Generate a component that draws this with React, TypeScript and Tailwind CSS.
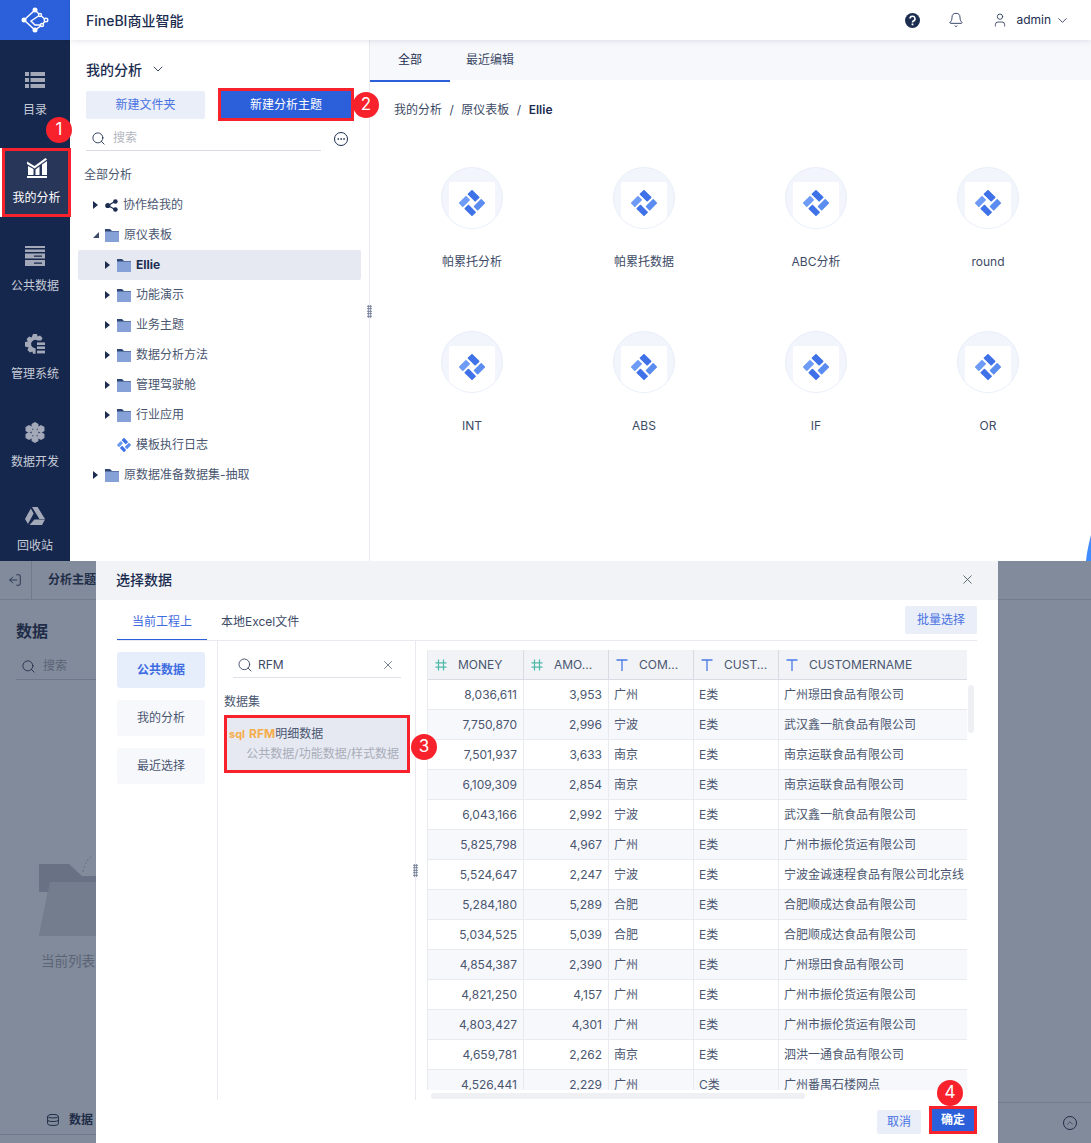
import React from "react";
import { ChevronDown, Search, X, Bell, User, Ellipsis, LogOut } from "lucide-react";

const navItems = [
  { label: "目录", icon: "list" },
  { label: "我的分析", icon: "chart", active: true },
  { label: "公共数据", icon: "store" },
  { label: "管理系统", icon: "gear" },
  { label: "数据开发", icon: "cube" },
  { label: "回收站", icon: "drive" },
];

const treeRows = [
  { label: "协作给我的", level: 1, kind: "share" },
  { label: "原仪表板", level: 1, kind: "open" },
  { label: "Ellie", level: 2, kind: "folder", selected: true },
  { label: "功能演示", level: 2, kind: "folder" },
  { label: "业务主题", level: 2, kind: "folder" },
  { label: "数据分析方法", level: 2, kind: "folder" },
  { label: "管理驾驶舱", level: 2, kind: "folder" },
  { label: "行业应用", level: 2, kind: "folder" },
  { label: "模板执行日志", level: 2, kind: "logo" },
  { label: "原数据准备数据集-抽取", level: 1, kind: "folder" },
];

const files = ["帕累托分析", "帕累托数据", "ABC分析", "round", "INT", "ABS", "IF", "OR"];

const columns = [
  { name: "MONEY", type: "num", w: "w-[96px]" },
  { name: "AMO...", type: "num", w: "w-[85px]" },
  { name: "COM...", type: "text", w: "w-[85px]" },
  { name: "CUST...", type: "text", w: "w-[85px]" },
  { name: "CUSTOMERNAME", type: "text", w: "w-[188px]" },
];

const rows = [
  ["8,036,611", "3,953", "广州", "E类", "广州璟田食品有限公司"],
  ["7,750,870", "2,996", "宁波", "E类", "武汉鑫一航食品有限公司"],
  ["7,501,937", "3,633", "南京", "E类", "南京运联食品有限公司"],
  ["6,109,309", "2,854", "南京", "E类", "南京运联食品有限公司"],
  ["6,043,166", "2,992", "宁波", "E类", "武汉鑫一航食品有限公司"],
  ["5,825,798", "4,967", "广州", "E类", "广州市振伦货运有限公司"],
  ["5,524,647", "2,247", "宁波", "E类", "宁波金诚速程食品有限公司北京线"],
  ["5,284,180", "5,289", "合肥", "E类", "合肥顺成达食品有限公司"],
  ["5,034,525", "5,039", "合肥", "E类", "合肥顺成达食品有限公司"],
  ["4,854,387", "2,390", "广州", "E类", "广州璟田食品有限公司"],
  ["4,821,250", "4,157", "广州", "E类", "广州市振伦货运有限公司"],
  ["4,803,427", "4,301", "广州", "E类", "广州市振伦货运有限公司"],
  ["4,659,781", "2,262", "南京", "E类", "泗洪一通食品有限公司"],
  ["4,526,441", "2,229", "广州", "C类", "广州番禺石楼网点"],
];

// 数据开发图标的花瓣位置
const petals = [
  [10, 4],
  [4, 7],
  [16, 7],
  [4, 14],
  [16, 14],
  [10, 17],
  [10, 10.5],
];

function hexPoints(cx: number, cy: number, r: number) {
  return [0, 60, 120, 180, 240, 300]
    .map((a) => {
      const rad = ((a + 30) * Math.PI) / 180;
      return `${cx + r * Math.cos(rad)},${cy + r * Math.sin(rad)}`;
    })
    .join(" ");
}

function NavIcon({ name, active }: { name: string; active?: boolean }) {
  const c = active ? "#ffffff" : "#a3a9b8";
  if (name === "list")
    return (
      <svg width="20" height="16" viewBox="0 0 20 16" fill={c}>
        <rect x="0" y="0" width="4" height="4" />
        <rect x="5.5" y="0" width="14.5" height="4" />
        <rect x="0" y="6" width="4" height="4" />
        <rect x="5.5" y="6" width="14.5" height="4" />
        <rect x="0" y="12" width="4" height="4" />
        <rect x="5.5" y="12" width="14.5" height="4" />
      </svg>
    );
  if (name === "chart")
    return (
      <svg width="20" height="20" viewBox="0 0 20 20" fill={c}>
        <path d="M0 3.5 L7.5 8 L18.5 0 L20 1.5 L7.7 10.5 L0 6 Z" />
        <path d="M1 8 L6.5 11 V17 H1 Z" />
        <path d="M8.5 11.5 L12.5 8.5 V17 H8.5 Z" />
        <path d="M15 6.5 L20 3 V17 H15 Z" />
        <rect x="0" y="18" width="20" height="2" />
      </svg>
    );
  if (name === "store")
    return (
      <svg width="20" height="20" viewBox="0 0 20 20" fill={c}>
        <rect x="0" y="0" width="20" height="2" />
        <rect x="0" y="3.5" width="20" height="2.5" />
        <path d="M0 7.5 H20 V12.5 H0 Z M9 9.5 V10.8 H17 V9.5 Z" fillRule="evenodd" />
        <path d="M0 14 H20 V20 H0 Z M9 16.5 V17.8 H17 V16.5 Z" fillRule="evenodd" />
      </svg>
    );
  if (name === "gear")
    return (
      <svg width="20" height="20" viewBox="0 0 20 20" fill={c}>
        <path d="M8 0 H12 L12.6 2.6 L15 1.4 L17.6 4 L16.2 6.4 L12.4 6.4 A4.2 4.2 0 1 0 10.6 14.2 L10.6 19.8 H8 L7.4 17.4 L5 18.6 L2.4 16 L3.6 13.6 L0 12.4 V8 L2.8 7.4 L1.6 5 L4.2 2.4 L6.6 3.6 Z" />
        <rect x="12" y="8.4" width="8" height="2.6" />
        <rect x="12" y="12.4" width="8" height="2.6" />
        <rect x="12" y="16.6" width="8" height="2.8" />
      </svg>
    );
  if (name === "cube")
    return (
      <svg width="20" height="21" viewBox="0 0 20 21" fill={c}>
        {petals.map(([x, y]) => (
          <polygon key={`${x}-${y}`} points={hexPoints(x, y, 4)} />
        ))}
      </svg>
    );
  return (
    <svg width="20" height="18" viewBox="0 0 20 18" fill={c}>
      <path d="M7 0 H12.6 L20 12 H14.4 Z" />
      <path d="M5.8 1.6 L8.6 6.4 L3 17 L0 12 Z" />
      <path d="M9.4 12.6 H20 L17 18 H4.6 Z" />
    </svg>
  );
}

function Logo({ size = 26 }: { size?: number }) {
  return (
    <svg width={size} height={size} viewBox="0 0 26 26" className="shrink-0">
      <g transform="rotate(45 13 13)">
        <rect x="3.5" y="3.5" width="11" height="6.5" rx="0.8" fill="#3f71e8" />
        <rect x="16.5" y="3.5" width="6" height="11" rx="0.8" fill="#5b8cf0" />
        <rect x="11.5" y="16.5" width="11" height="6" rx="0.8" fill="#3f71e8" />
        <rect x="3.5" y="12" width="6" height="10.5" rx="0.8" fill="#6e9bf5" />
      </g>
    </svg>
  );
}

function Folder() {
  return (
    <svg width="14" height="13" viewBox="0 0 14 13" className="shrink-0">
      <path d="M0 0 H5 L7 2 H14 V4 H0 Z" fill="#2f4672" />
      <rect x="0" y="2.5" width="14" height="10.5" fill="#86a0d8" />
    </svg>
  );
}

function Caret({ open }: { open?: boolean }) {
  if (open)
    return (
      <svg width="6" height="6" viewBox="0 0 6 6">
        <path d="M0 6 L6 0 V6 Z" fill="#3c4a68" />
      </svg>
    );
  return (
    <svg width="5" height="8" viewBox="0 0 5 8">
      <path d="M0 0 L5 4 L0 8 Z" fill="#1c2d50" />
    </svg>
  );
}

function TreeRow({ row }: { row: (typeof treeRows)[number] }) {
  const pad = row.level === 1 ? "pl-[15px]" : "pl-[27px]";
  return (
    <div className={`flex items-center h-[30px] rounded-[2px] ${pad} ${row.selected ? "bg-[#e6e9f2]" : ""}`}>
      <div className="w-[12px] flex items-center">{row.kind !== "logo" && <Caret open={row.kind === "open"} />}</div>
      {row.kind === "share" ? (
        <svg width="13" height="13" viewBox="0 0 13 13" className="shrink-0">
          <path d="M3 6.5 L10 2.5 M3 6.5 L10 10.5" stroke="#1c2d50" strokeWidth="1.3" />
          <circle cx="2.8" cy="6.5" r="2.6" fill="#1c2d50" />
          <circle cx="10.4" cy="2.5" r="2.3" fill="#1c2d50" />
          <circle cx="10.4" cy="10.5" r="2.3" fill="#1c2d50" />
        </svg>
      ) : row.kind === "logo" ? (
        <Logo size={14} />
      ) : (
        <Folder />
      )}
      <span className={`ml-[5px] text-[12px] ${row.selected ? "font-bold text-[#1c2d50]" : "text-[#4a5670]"}`}>{row.label}</span>
    </div>
  );
}

function Dots() {
  return <div className="w-[5px] h-[13px] bg-[radial-gradient(#6b7690_1px,transparent_1px)] bg-[length:2.5px_2.5px]" />;
}

function Badge({ n, className }: { n: number; className: string }) {
  return (
    <div className={`absolute w-[26px] h-[26px] rounded-full bg-[#f7222c] text-white text-[17px] flex items-center justify-center ${className}`}>{n}</div>
  );
}

export default function App() {
  return (
    <div className="relative w-[1091px] h-[1143px] overflow-hidden bg-white text-[12px] text-[#1c2d50] font-['Inter','Noto_Sans_CJK_SC',sans-serif]">
      {/* 上半部分 */}
      <div className="flex h-[561px] overflow-hidden">
        <aside className="w-[70px] shrink-0 bg-[#16274d] flex flex-col">
          <div className="h-[40px] bg-[#2c60db] flex items-center justify-center shrink-0">
            <svg width="28" height="28" viewBox="0 0 28 28" fill="none" stroke="#fff" strokeWidth="1.4">
              <path d="M14 4 L3 14 L14 24 L21 19 L25 14 L19 9 L14 4 M19 9 L10 15 L14 19 L21 19" />
              <circle cx="14" cy="4" r="2.5" fill="#fff" stroke="none" />
              <circle cx="3" cy="14" r="2.5" fill="#fff" stroke="none" />
              <circle cx="14" cy="24" r="2.5" fill="#fff" stroke="none" />
              <circle cx="25" cy="14" r="1.8" fill="#2c60db" />
              <circle cx="19" cy="9" r="1.5" fill="#2c60db" />
              <circle cx="21" cy="19" r="1.5" fill="#2c60db" />
            </svg>
          </div>
          <nav className="flex flex-col gap-[20px] pt-[20px]">
            {navItems.map((item) =>
              item.active ? (
                <div key={item.label} className="shrink-0 h-[69px] -mb-px border-l-2 border-white">
                  <div className="h-full border-[3px] border-[#f7222c] bg-[#28365a] flex flex-col items-center pt-[7px] -mr-px">
                    <NavIcon name={item.icon} active />
                    <span className="mt-[12px] text-white text-[12px] leading-[16px]">{item.label}</span>
                  </div>
                </div>
              ) : (
                <div key={item.label} className={`shrink-0 h-[68px] flex flex-col items-center justify-start pt-[10px] ${item.icon === "drive" ? "-mt-[4px]" : ""}`}>
                  <div className="h-[20px] flex items-center">
                    <NavIcon name={item.icon} />
                  </div>
                  <span className="mt-[12px] text-[#c6cbd6] text-[12px] leading-[16px]">{item.label}</span>
                </div>
              )
            )}
          </nav>
        </aside>

        <div className="flex-1 flex flex-col min-w-0">
          <header className="h-[40px] shrink-0 bg-white flex items-center pl-[16px] pr-[21px] shadow-[0_1px_6px_rgba(30,45,80,0.12)] z-10">
            <span className="text-[14px] font-medium text-[#1c2d50]">FineBI商业智能</span>
            <div className="ml-auto flex items-center">
              <svg width="15" height="15" viewBox="0 0 15 15">
                <circle cx="7.5" cy="7.5" r="7.5" fill="#1c2d50" />
                <path d="M5 5.6 A2.5 2.4 0 1 1 8.4 7.9 Q7.5 8.3 7.5 9.4" fill="none" stroke="#fff" strokeWidth="1.6" />
                <rect x="6.6" y="10.5" width="1.8" height="1.8" fill="#fff" />
              </svg>
              <Bell size={16} strokeWidth={1.3} className="ml-[28px] text-[#1c2d50]" />
              <User size={16} strokeWidth={1.2} className="ml-[28px] text-[#1c2d50]" />
              <span className="ml-[8px] text-[12px]">admin</span>
              <ChevronDown size={15} strokeWidth={1.3} className="ml-[4px] text-[#1c2d50]" />
            </div>
          </header>
          <div className="flex-1 flex min-h-0">
            <section className="relative w-[300px] shrink-0 border-r border-[#e8eaf0] pl-[8px] pr-[8px]">
              <div className="flex items-center h-[30px] mt-[14px] pl-[8px]">
                <span className="text-[14px] font-medium">我的分析</span>
                <ChevronDown size={16} strokeWidth={1.3} className="ml-[8px]" />
              </div>
              <div className="flex items-center mt-[4px] pl-[8px]">
                <button className="w-[119px] h-[28px] rounded-[2px] bg-[#e9eef9] text-[#4a72e2] text-[12px]">新建文件夹</button>
                <button className="ml-[13px] w-[136px] h-[33px] border-[3px] border-[#f7222c] bg-[#2c60db] text-white text-[12px]">新建分析主题</button>
              </div>
              <div className="flex items-center mt-[5px] pl-[8px]">
                <div className="w-[235px] h-[25px] border-b border-[#d8dbe3] flex items-center pl-[5px]">
                  <Search size={15} strokeWidth={1.4} className="text-[#1c2d50]" />
                  <span className="ml-[7px] text-[#b3b7c2]">搜索</span>
                </div>
                <div className="ml-[13px] w-[14px] h-[14px] rounded-full border border-[#1c2d50] flex items-center justify-center">
                  <Ellipsis size={10} strokeWidth={2} />
                </div>
              </div>
              <div className="mt-[15px] pl-[6px] h-[17px] leading-[17px] text-[#4a5670]">全部分析</div>
              <div className="mt-[7px]">
                {treeRows.map((row) => (
                  <TreeRow key={row.label} row={row} />
                ))}
              </div>
              <div className="absolute right-[-3px] top-[265px]">
                <Dots />
              </div>
            </section>
            <section className="relative flex-1 min-w-0">
              <div className="h-[40px] bg-[#f7f8fc] flex">
                <div className="w-[80px] h-[42px] flex items-center justify-center border-b-2 border-[#2c60db] text-[#1c2d50]">全部</div>
                <div className="ml-[16px] h-[40px] flex items-center text-[#3d4a66]">最近编辑</div>
              </div>
              <div className="mt-[21px] pl-[24px] flex items-center h-[17px] text-[#3d4a66]">
                <span>我的分析</span>
                <span className="mx-[7.5px]">/</span>
                <span>原仪表板</span>
                <span className="mx-[7.5px]">/</span>
                <span className="font-semibold text-[#1c2d50]">Ellie</span>
              </div>
              <div className="mt-[49px] ml-[16px] grid grid-cols-[repeat(4,172px)] auto-rows-[164px]">
                {files.map((f) => (
                  <div key={f} className="flex flex-col items-center">
                    <div className="relative w-[62px] h-[62px] rounded-full overflow-hidden bg-[#f2f6fc] border border-[#e8eefa] flex justify-center pt-[14px]">
                      <div className="w-[46px] h-[48px] rounded-t-[2px] bg-white flex justify-center pt-[8px]">
                        <Logo />
                      </div>
                    </div>
                    <span className="mt-[25px] text-[#3d4a66] text-[12px] leading-[16px]">{f}</span>
                  </div>
                ))}
              </div>
              <svg className="absolute right-0 bottom-0" width="5" height="26" viewBox="0 0 5 26">
                <path d="M5 0 C3 8 1 16 0 26 H5 Z" fill="#3f8cff" />
              </svg>
            </section>
          </div>
        </div>
      </div>

      {/* 下半部分:选择数据弹窗 */}
      <div className="flex h-[582px]">
        <div className="w-[96px] shrink-0 bg-[#828b9b] overflow-hidden flex flex-col">
          <div className="h-[39px] border-b border-[#727b8c] flex items-center shrink-0">
            <div className="w-[33px] h-full border-r border-[#727b8c] flex items-center justify-center">
              <LogOut size={14} strokeWidth={1.5} className="rotate-180 text-[#1f2d48]" />
            </div>
            <span className="ml-[16px] whitespace-nowrap font-semibold text-[#1f2d48]">分析主题</span>
          </div>
          <div className="mt-[20px] pl-[16px] text-[16px] font-semibold leading-[22px] text-[#1f2d48]">数据</div>
          <div className="mt-[11px] ml-[16px] h-[27px] border-b border-[#6f788a] flex items-center pl-[5px]">
            <Search size={15} strokeWidth={1.4} className="text-[#1f2d48] shrink-0" />
            <span className="ml-[7px] text-[#5a6476]">搜索</span>
          </div>
          <svg className="mt-[172px] ml-[39px] shrink-0" width="80" height="84" viewBox="0 0 80 84">
            <path d="M0 12 H30 L43 24 H75 V40 H0 Z" fill="#687284" />
            <path d="M0 12 V84 L11 30 H70 V84 H0 Z" fill="#6a7485" />
            <path d="M11 30 H75 L65 84 H0 Z" fill="#737d8e" />
            <path d="M44 20 Q46 8 54 3" fill="none" stroke="#646e80" strokeDasharray="2 2" />
          </svg>
          <div className="mt-[17px] ml-[41px] whitespace-nowrap text-[13.5px] leading-[17px] text-[#5a6476]">当前列表</div>
          <div className="mt-auto h-[31px] mb-[8px] border-b border-[#6f788a] flex items-center pl-[47px] pt-[2px] shrink-0">
            <svg width="12" height="12" viewBox="0 0 12 12" fill="none" stroke="#1f2d48" strokeWidth="1">
              <ellipse cx="6" cy="2.2" rx="5.4" ry="1.8" />
              <path d="M0.6 2.2 V9.8 C0.6 12 11.4 12 11.4 9.8 V2.2 M0.6 6 C0.6 8 11.4 8 11.4 6" />
            </svg>
            <span className="ml-[10px] font-semibold text-[#1f2d48]">数据</span>
          </div>
        </div>

        <div className="w-[902px] shrink-0 bg-white flex flex-col">
          <div className="h-[39px] bg-[#f1f3f7] flex items-center pl-[20px] pr-[23px] pb-[2px] shrink-0">
            <span className="text-[14px] font-medium text-[#1c2d50]">选择数据</span>
            <X size={15} strokeWidth={1.3} className="ml-auto text-[#3c4f55]" />
          </div>
          <div className="h-[41px] flex items-start pl-[21px] pr-[21px] shrink-0">
            <div className="w-[90px] h-[41px] flex items-center justify-center pt-[4px] border-b-2 border-[#2c60db] text-[#3f6ce0]">当前工程上</div>
            <div className="ml-[14px] h-[41px] flex items-center pt-[3px] text-[#3d4a66]">本地Excel文件</div>
            <div className="ml-auto mt-[6px] w-[72px] h-[28px] rounded-[2px] bg-[#e9eef9] text-[#4a72e2] flex items-center justify-center">批量选择</div>
          </div>
          <div className="h-[460px] flex mr-[21px] border-t border-[#e8eaf0] shrink-0 -mt-px ml-[21px]">
            <div className="w-[100px] shrink-0 flex flex-col gap-[12px] pt-[11px] pr-[12px]">
              <div className="h-[36px] rounded-[3px] bg-[#e6eefc] text-[#3f6ce0] font-semibold flex items-center justify-center">公共数据</div>
              <div className="h-[36px] rounded-[3px] bg-[#f7f8fc] text-[#4a5670] flex items-center justify-center">我的分析</div>
              <div className="h-[36px] rounded-[3px] bg-[#f7f8fc] text-[#4a5670] flex items-center justify-center">最近选择</div>
            </div>
            <div className="relative w-[199px] shrink-0 border-x border-[#e8eaf0] pl-[6px] pr-[5px]">
              <div className="mt-[10px] mx-[9px] h-[27px] border-b border-[#dfe1e8] flex items-center pl-[4px] pr-[6px] pt-[1px]">
                <Search size={16} strokeWidth={1.4} className="text-[#3d4a66]" />
                <span className="ml-[5px] text-[#3d4a66]">RFM</span>
                <X size={14} strokeWidth={1.2} className="ml-auto text-[#3d4a66]" />
              </div>
              <div className="mt-[15px] h-[17px] leading-[17px] text-[#4a5670]">数据集</div>
              <div className="mt-[5px] h-[58px] border-[3px] border-[#f7222c] bg-[#e6e9f2] pl-[2px] pr-[8px] pt-[7px]">
                <div className="flex items-center h-[18px]">
                  <span className="text-[11px] font-bold text-[#f5ad4a] leading-none">sql</span>
                  <span className="ml-[4px] font-bold text-[#f5ad4a]">RFM</span>
                  <span className="text-[#4a5670]">明细数据</span>
                </div>
                <div className="mt-[2px] text-right text-[#a9adb9] whitespace-nowrap">公共数据/功能数据/样式数据</div>
              </div>
              <div className="absolute right-[-3px] top-[223px]">
                <Dots />
              </div>
            </div>
            <div className="relative flex-1 min-w-0 pl-[11px] pt-[9px]">
              <div className="w-[540px] h-[440px] overflow-hidden border-l border-[#e8eaf0]">
                <div className="flex h-[30px] bg-[#f1f3f7] border-b border-[#d8dbe3]">
                  {columns.map((col) => (
                    <div key={col.name} className={`${col.w} shrink-0 flex items-center pl-[7px] border-r border-[#d8dbe3] last:border-r-0 text-[#4a5670]`}>
                      {col.type === "num" ? (
                        <svg width="12" height="12" viewBox="0 0 12 12" stroke="#4fb9a8" strokeWidth="1.2">
                          <path d="M3.5 0.5 V11.5 M8.5 0.5 V11.5 M0.5 3.8 H11.5 M0.5 8.2 H11.5" />
                        </svg>
                      ) : (
                        <svg width="12" height="12" viewBox="0 0 12 12" stroke="#4a7ae8" strokeWidth="1.3">
                          <path d="M0.5 1 H11.5 M6 1 V12" />
                        </svg>
                      )}
                      <span className="ml-[11px] whitespace-nowrap">{col.name}</span>
                    </div>
                  ))}
                </div>
                {rows.map((r, i) => (
                  <div key={i} className={`flex h-[30px] border-b border-[#e8eaf0] ${i % 2 === 1 ? "bg-[#f7f8fc]" : "bg-white"}`}>
                    {r.map((cell, j) => (
                      <div
                        key={j}
                        className={`${columns[j].w} shrink-0 flex items-center border-r border-[#e8eaf0] last:border-r-0 whitespace-nowrap overflow-hidden text-[#4a5670] ${j < 2 ? "justify-end pr-[6px]" : "pl-[5px]"}`}
                      >
                        {cell}
                      </div>
                    ))}
                  </div>
                ))}
              </div>
              <div className="absolute left-[552px] top-[44px] w-[6px] h-[48px] rounded-full bg-[#eff0f3]" />
              <div className="absolute left-[15px] top-[452px] w-[374px] h-[6px] rounded-full bg-[#eff0f3]" />
            </div>
          </div>
          <div className="flex-1 flex items-start justify-end pr-[21px] pt-[6px]">
            <button className="mt-[4px] w-[44px] h-[24px] rounded-[2px] bg-[#e9eef9] text-[#4a72e2] text-[12px]">取消</button>
            <button className="ml-[8px] w-[48px] h-[28px] border-[3px] border-[#f7222c] bg-[#2c60db] text-white text-[12px] font-semibold">确定</button>
          </div>
        </div>

        <div className="flex-1 bg-[#828b9b] flex flex-col">
          <div className="h-[39px] border-b border-[#727b8c]" />
          <div className="h-[503px] border-b border-[#727b8c]" />
          <div className="flex-1 flex items-start justify-end pr-[14px] pt-[13px]">
            <div className="w-[14px] h-[14px] rounded-full border border-[#1f2d48] flex items-center justify-center">
              <ChevronDown size={10} strokeWidth={1.5} className="rotate-180 text-[#1f2d48]" />
            </div>
          </div>
        </div>
      </div>

      {/* 标注序号 */}
      <Badge n={1} className="left-[46px] top-[117px]" />
      <Badge n={2} className="left-[353px] top-[92px]" />
      <Badge n={3} className="left-[411px] top-[734px]" />
      <Badge n={4} className="left-[937px] top-[1080px]" />
    </div>
  );
}
